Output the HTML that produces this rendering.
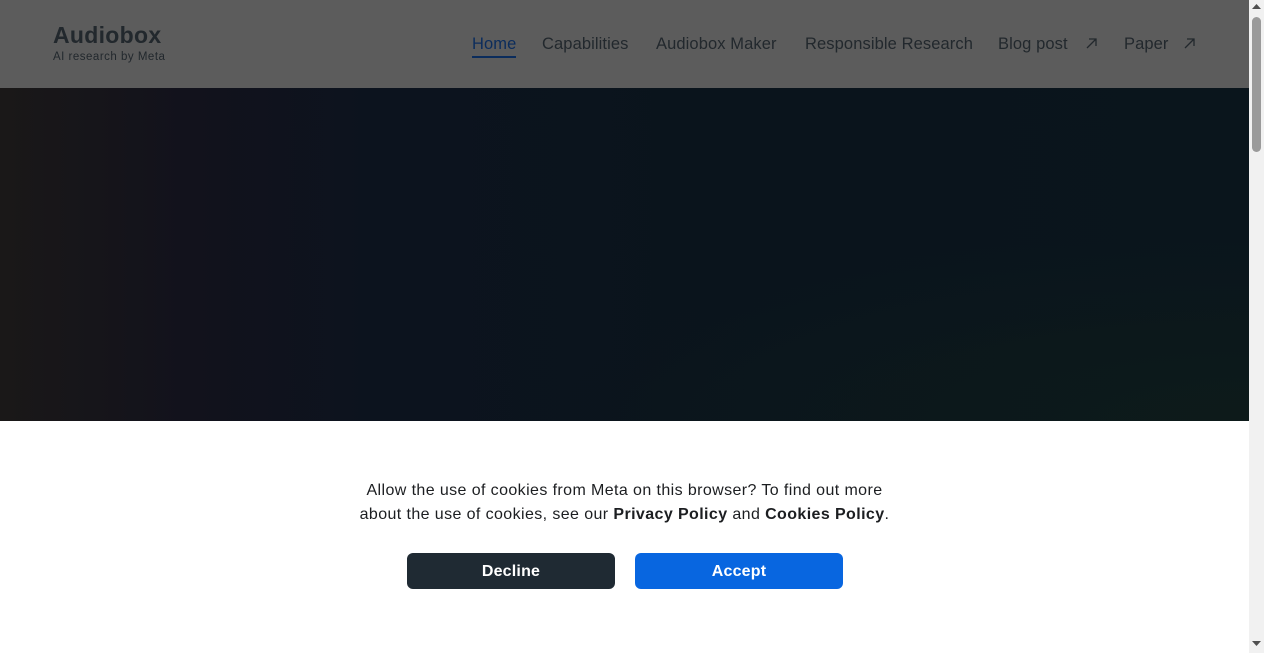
<!DOCTYPE html>
<html><head><meta charset="utf-8"><style>
*{margin:0;padding:0;box-sizing:border-box}
body{width:1264px;height:653px;overflow:hidden;font-family:"Liberation Sans",sans-serif;background:#fff;position:relative}
.hdr{position:absolute;left:0;top:0;width:1249px;height:88px;background:#5c5c5c}
.logo{position:absolute;left:53px;top:22px;color:#22282d;font-size:23px;font-weight:bold;letter-spacing:0.3px}
.sub{position:absolute;left:53px;top:51px;color:#22282d;font-size:11.5px;letter-spacing:0.5px}
.nav{position:absolute;top:35px;font-size:16.5px;color:#22282d;letter-spacing:0.1px}
.home{color:#0b2c5c;border-bottom:2px solid #0b2c5c;padding-bottom:2px}
.hero{position:absolute;left:0;top:88px;width:1249px;height:333px;background:linear-gradient(90deg,#1a1818 0%,#12121c 15%,#0c131e 30%,#0a141c 60%,#0a151c 100%)}
.hero:after{content:"";position:absolute;inset:0;background:radial-gradient(ellipse at 100% 100%,rgba(14,28,26,0.8) 0%,rgba(14,28,26,0) 40%)}
.ck{position:absolute;left:0;top:421px;width:1249px;height:232px;background:#fff}
.txt{position:absolute;left:0;width:1249px;top:58px;text-align:center;font-size:16px;line-height:24px;color:#1c1e21;letter-spacing:0.4px}
.btn{position:absolute;top:132px;width:208px;height:36px;border-radius:6px;color:#fff;font-size:16px;font-weight:bold;text-align:center;line-height:38px;letter-spacing:0.2px}
.sb{position:absolute;right:0;top:0;width:15px;height:653px;background:#f1f1f1}
.th{position:absolute;left:3px;top:17px;width:9px;height:135px;background:#9a9a9a;border-radius:5px}
</style></head><body>
<div class="hdr">
<div class="logo">Audiobox</div>
<div class="sub">AI research by Meta</div>
<div class="nav home" style="left:472px">Home</div>
<div class="nav" style="left:542px">Capabilities</div>
<div class="nav" style="left:656px">Audiobox Maker</div>
<div class="nav" style="left:805px">Responsible Research</div>
<div class="nav" style="left:998px">Blog post</div>
<svg style="position:absolute;left:1086px;top:38px" width="11" height="11" viewBox="0 0 11 11"><path d="M1 10L10 1M3 1H10V8" stroke="#22282d" stroke-width="1.3" fill="none"/></svg>
<div class="nav" style="left:1124px">Paper</div>
<svg style="position:absolute;left:1184px;top:38px" width="11" height="11" viewBox="0 0 11 11"><path d="M1 10L10 1M3 1H10V8" stroke="#22282d" stroke-width="1.3" fill="none"/></svg>
</div>
<div class="hero"></div>
<div class="ck">
<div class="txt">Allow the use of cookies from Meta on this browser? To find out more<br>about the use of cookies, see our <b>Privacy Policy</b> and <b>Cookies Policy</b>.</div>
<div class="btn" style="left:407px;background:#1f2a33">Decline</div>
<div class="btn" style="left:635px;background:#0866e0">Accept</div>
</div>
<div class="sb"><div class="th"></div>
<svg style="position:absolute;left:3px;top:3px" width="9" height="6"><path d="M0 6L4.5 1L9 6Z" fill="#505050"/></svg>
<svg style="position:absolute;left:3px;top:641px" width="9" height="6"><path d="M0 0L4.5 5L9 0Z" fill="#505050"/></svg>
</div>
</body></html>
